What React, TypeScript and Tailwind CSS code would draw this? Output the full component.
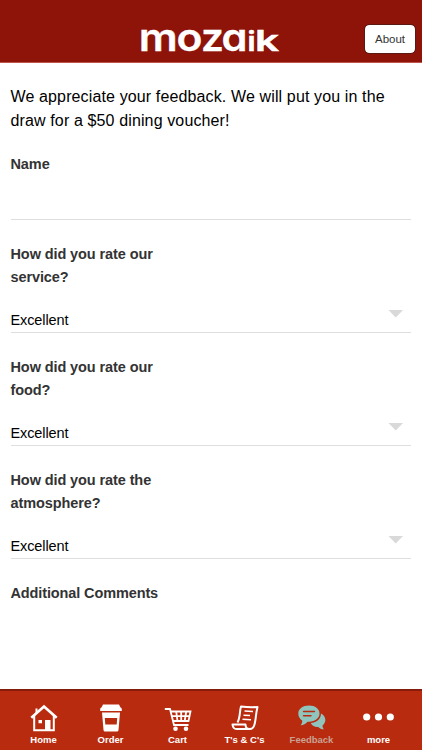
import type { ReactNode } from "react";

type Rating = { id: string; label: string; value: string };

const ratings: Rating[] = [
  { id: "service", label: "How did you rate our service?", value: "Excellent" },
  { id: "food", label: "How did you rate our food?", value: "Excellent" },
  { id: "atmosphere", label: "How did you rate the atmosphere?", value: "Excellent" },
];

function Logo() {
  return (
    <svg
      width="144"
      height="56"
      viewBox="0 0 144 56"
      className="overflow-visible font-['Inter',sans-serif] font-semibold"
      fill="#fff"
      stroke="#fff"
      strokeWidth="0.300"
    >
      <text y="45" fontSize="37.500" style={{ fontFeatureSettings: "'cv11'" }}>
        <tspan x="-0.300" textLength="39" lengthAdjust="spacingAndGlyphs">m</tspan>
        <tspan x="37.500" textLength="26" lengthAdjust="spacingAndGlyphs">o</tspan>
        <tspan x="62" textLength="23" lengthAdjust="spacingAndGlyphs">z</tspan>
        <tspan x="82.500" textLength="26" lengthAdjust="spacingAndGlyphs">a</tspan>
        <tspan x="108.500" fontSize="27.500" strokeWidth="0.600" textLength="8" lengthAdjust="spacingAndGlyphs">i</tspan>
        <tspan x="116" fontSize="28" strokeWidth="0.500" textLength="24" lengthAdjust="spacingAndGlyphs">k</tspan>
      </text>
    </svg>
  );
}

function HomeIcon() {
  return (
    <svg width="28" height="28" viewBox="0 0 28 28" fill="none" stroke="#fff" strokeWidth="2">
      <path d="M1.300 13.800 14 2.500l12.700 11.300" strokeWidth="2.600" />
      <path d="M4.200 12v14.200h19.600V12M6.500 9V4.500" />
      <path d="M15 16h5.500v10H15zM8.500 16H12v3.300H8.500z" fill="#fff" stroke="none" />
    </svg>
  );
}

function OrderIcon() {
  return (
    <svg width="28" height="28" viewBox="0 0 28 28" fill="#fff">
      <path d="M6 .5h16l1.500 3c1 .2 1.300 1 1.300 2V7H3.200V5.500c0-1 .3-1.800 1.300-2z" />
      <path fillRule="evenodd" d="M5 8.500h18L21.500 26q-.2 1.500-1.500 1.500H8q-1.300 0-1.500-1.500zM7.800 14l.5 6.500h11.400l.5-6.500z" />
    </svg>
  );
}

function CartIcon() {
  return (
    <svg width="28" height="28" viewBox="0 0 28 28" fill="none" stroke="#fff" strokeWidth="1.800">
      <path d="M.8 5H6l4 16h14.500" />
      <path d="M6.500 7.500h20L24.500 17H9M7.500 12.200h18M12.200 7.500l1.300 9.500M17.200 7.500V17M22.200 7.500 20.700 17" />
      <circle cx="11.500" cy="24.700" r="2.300" fill="#fff" stroke="none" />
      <circle cx="22" cy="24.700" r="2.300" fill="#fff" stroke="none" />
    </svg>
  );
}

function TermsIcon() {
  return (
    <svg width="28" height="28" viewBox="0 0 28 28" fill="none" stroke="#fff" strokeWidth="2" strokeLinejoin="round">
      <path d="M6.500 18.500C9.500 13 8.500 7 10 2.500q8 1 16.500.5c-2 8-1.500 14-3.500 19-1 2.500-2 3-4 3H5.500q-3.500 0-4-4.500h13c0 3 1 4.500 4 4.500" />
      <path d="m13.500 7 8.500.5M12.500 11.200l6.500.3M11.500 15.300l8.500.5" strokeWidth="1.600" />
    </svg>
  );
}

function FeedbackIcon() {
  return (
    <svg width="28" height="28" viewBox="0 0 28 28">
      <path d="M23 9.500c3 1.500 4.500 4 4.300 7-.2 2-1.300 3.700-2.800 4.900 0 1.500.4 2.600 1.500 3.900-2.500 0-4.300-.9-5.700-2.300-3.300.3-6.300-1.300-7.500-4 5 0 10-3.500 10.200-9.500z" fill="#8fc5bd" />
      <path d="M11 1.500c6.200 0 10.500 3.500 10.500 8s-4.300 8.200-10.500 8.200h-1.500C7.500 20 5.500 21 2.700 21.300c1.300-1.500 1.600-3 1.500-4.700C1.800 15 .3 12.500.3 9.500c0-4.500 4.500-8 10.700-8z" fill="#8fc5bd" />
      <path d="M5.500 7.500h11M5.500 11.700h7.500" stroke="#b92b0e" strokeWidth="1.400" strokeLinecap="round" />
    </svg>
  );
}

function MoreIcon() {
  return (
    <svg width="32" height="28" viewBox="0 0 32 28" fill="#fff">
      <circle cx="3.700" cy="13" r="3.600" />
      <circle cx="15.500" cy="13" r="3.600" />
      <circle cx="27.300" cy="13" r="3.600" />
    </svg>
  );
}

const tabs: { label: string; icon: ReactNode; active?: boolean }[] = [
  { label: "Home", icon: <HomeIcon /> },
  { label: "Order", icon: <OrderIcon /> },
  { label: "Cart", icon: <CartIcon /> },
  { label: "T's & C's", icon: <TermsIcon /> },
  { label: "Feedback", icon: <FeedbackIcon />, active: true },
  { label: "more", icon: <MoreIcon /> },
];

export default function App() {
  return (
    <div className="flex h-[750px] w-[422px] flex-col overflow-hidden bg-white font-['Liberation_Sans',sans-serif]">
      {/* Header */}
      <header className="grid h-[63px] shrink-0 grid-cols-[1fr_144px_1fr] items-start border-b border-[#c0544a] bg-[#8e1308]">
        <h1 className="col-start-2 pt-1.5">
          <Logo />
        </h1>
        <button className="mt-[25px] mr-[7px] h-7 w-[50px] justify-self-end rounded-[4px] bg-white pt-px text-[11.500px] text-[#333] outline outline-[#5a1a14]">
          About
        </button>
      </header>

      {/* Feedback form */}
      <main className="flex-1 px-[11px] pt-[22px]">
        <p className="-ml-[0.5px] text-base leading-6 tracking-[0.13px] text-black">
          We appreciate your feedback. We will put you in the draw for a $50 dining voucher!
        </p>

        <div className="mt-5 h-[67px] border-b border-[#dedede]">
          <label className="-ml-[0.5px] block text-[14.500px] leading-[23px] font-bold tracking-[-0.1px] text-[#333]">
            Name
          </label>
        </div>

        {ratings.map((r) => (
          <div key={r.id} className="h-[113px] border-b border-[#dedede] pt-[23px]">
            <label className="-ml-[0.5px] block w-[150px] text-[14.500px] leading-[23px] font-bold tracking-[-0.1px] text-[#333]">
              {r.label}
            </label>
            <div className="mt-[18px] flex items-start justify-between pr-2">
              <span className="-ml-[0.5px] pt-px text-[14.500px] leading-6 tracking-[-0.1px] text-black">{r.value}</span>
              <svg width="15" height="8" viewBox="0 0 15 8" className="mt-[3px]" fill="#d9d9d9">
                <path d="M.5 0H15L7.750 7.500z" />
              </svg>
            </div>
          </div>
        ))}

        <label className="mt-[23px] -ml-[0.5px] block text-[14.500px] leading-[23px] font-bold tracking-[-0.12px] text-[#333]">
          Additional Comments
        </label>
      </main>

      {/* Tab bar */}
      <nav className="flex h-[61px] shrink-0 border-t-2 border-[#861c0b] bg-[#b92b0e] px-[10px]">
        {tabs.map((tab) => (
          <div key={tab.label} className="flex flex-1 flex-col items-center pt-[13px]">
            {tab.icon}
            <span
              className={`mt-[2px] text-[9.500px] leading-3 font-bold whitespace-nowrap ${tab.active ? "text-[#c9a294]" : "text-white"}`}
            >
              {tab.label}
            </span>
          </div>
        ))}
      </nav>
    </div>
  );
}
